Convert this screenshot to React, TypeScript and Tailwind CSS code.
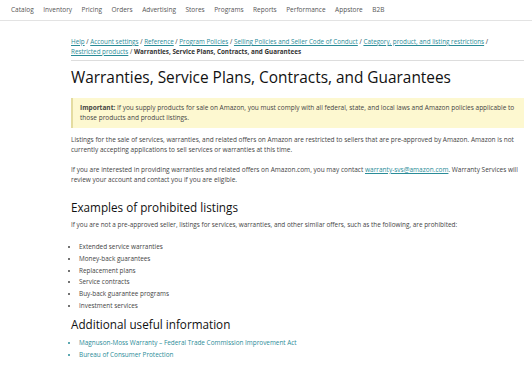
import { Fragment } from 'react'

const nav = ['Catalog', 'Inventory', 'Pricing', 'Orders', 'Advertising', 'Stores', 'Programs', 'Reports', 'Performance', 'Appstore', 'B2B']

const crumbs = [
  'Help',
  'Account settings',
  'Reference',
  'Program Policies',
  'Selling Policies and Seller Code of Conduct',
  'Category, product, and listing restrictions',
  'Restricted products',
]

const prohibited = [
  'Extended service warranties',
  'Money-back guarantees',
  'Replacement plans',
  'Service contracts',
  'Buy-back guarantee programs',
  'Investment services',
]

export default function App() {
  return (
    <div className="w-[532px] h-[373px] overflow-hidden bg-white text-[#444] font-['Open_Sans',sans-serif]">
      <nav className="h-[21px] border-b border-[#e3e3e3] flex items-center gap-[9.5px] px-[11px] text-[6.5px] text-[#555]">
        {nav.map((n) => (
          <span key={n}>{n}</span>
        ))}
      </nav>

      <main className="pl-[71px] pr-[8px]">
        <div className="pt-[16px] pb-[4px] border-b border-[#ddd] text-[6.3px] leading-[9.5px] text-[#333]">
          {crumbs.map((c) => (
            <Fragment key={c}>
              <span className="whitespace-nowrap">
                <a className="text-[#2a8c98] underline">{c}</a> /
              </span>{' '}
            </Fragment>
          ))}
          <b>Warranties, Service Plans, Contracts, and Guarantees</b>
        </div>

        <h1 className="mt-[7px] text-[15.4px] leading-[20px] text-[#111]">
          Warranties, Service Plans, Contracts, and Guarantees
        </h1>

        <div className="mt-[10px] bg-[#fdf8d0] border-l-2 border-[#e4dca0] px-[7px] py-[5px] text-[6.5px] leading-[10px]">
          <b>Important:</b> If you supply products for sale on Amazon, you must comply with all federal, state, and local laws and Amazon policies applicable to those products and product listings.
        </div>

        <p className="mt-[7px] pr-[6px] text-[6.5px] leading-[10px]">
          Listings for the sale of services, warranties, and related offers on Amazon are restricted to sellers that are pre-approved by Amazon. Amazon is not currently accepting applications to sell services or warranties at this time.
        </p>
        <p className="mt-[10px] pr-[6px] text-[6.5px] leading-[10px]">
          If you are interested in providing warranties and related offers on Amazon.com, you may contact{' '}
          <a className="text-[#2a8c98] underline">warranty-svs@amazon.com</a>. Warranty Services will review your account and contact you if you are eligible.
        </p>

        <h2 className="mt-[14px] text-[11.7px] leading-[16px] text-[#111]">Examples of prohibited listings</h2>
        <p className="mt-[5px] text-[6.4px] leading-[10px]">
          If you are not a pre-approved seller, listings for services, warranties, and other similar offers, such as the following, are prohibited:
        </p>

        <ul className="mt-[11px] pl-[8px] list-disc text-[6.4px] leading-[11.8px]">
          {prohibited.map((p) => (
            <li key={p}>{p}</li>
          ))}
        </ul>

        <h2 className="mt-[4px] text-[11.7px] leading-[16px] text-[#111]">Additional useful information</h2>
        <ul className="mt-[5px] pl-[8px] list-disc text-[6.4px] leading-[11.8px] text-[#2a8c98]">
          <li>Magnuson-Moss Warranty – Federal Trade Commission Improvement Act</li>
          <li>Bureau of Consumer Protection</li>
        </ul>
      </main>
    </div>
  )
}
